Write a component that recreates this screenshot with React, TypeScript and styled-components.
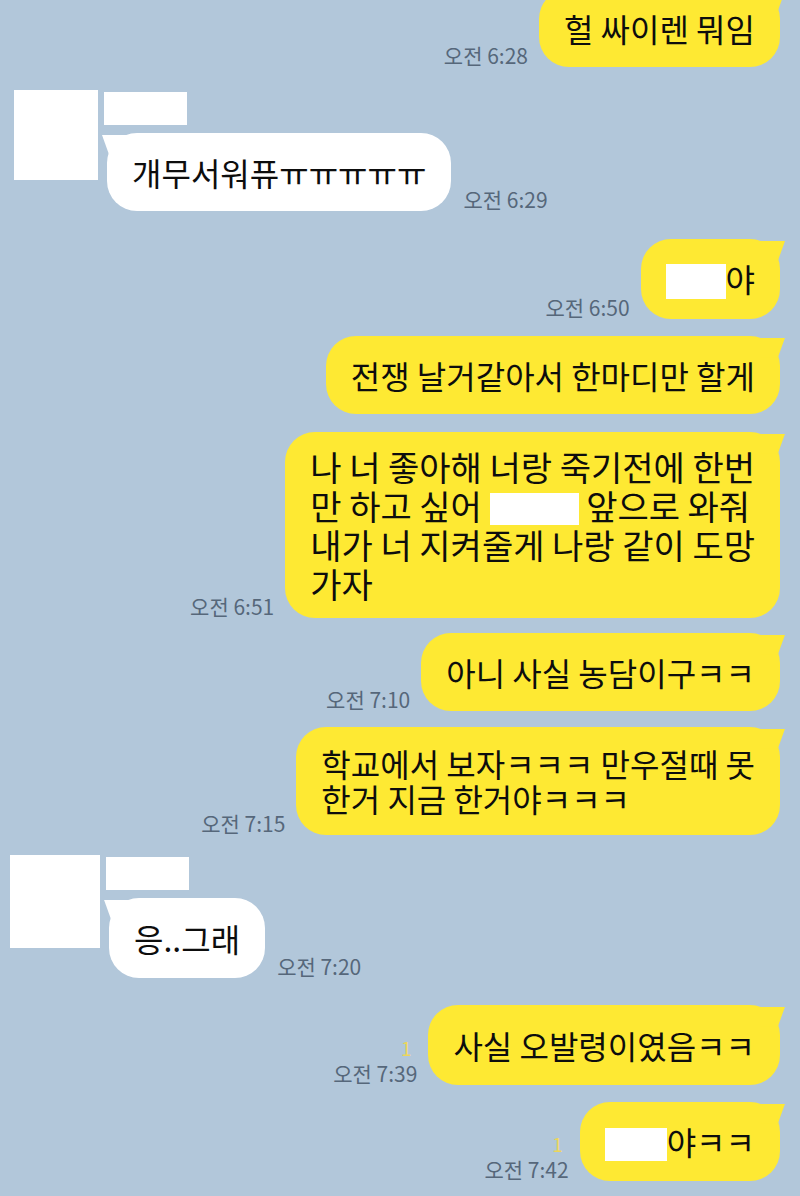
import React from 'react';
import styled, { createGlobalStyle, css } from 'styled-components';

const GlobalStyle = createGlobalStyle`
  html, body {
    margin: 0;
    padding: 0;
    background: #b2c7da;
  }
  body {
    font-family: "Noto Sans CJK KR", "Noto Sans", sans-serif;
  }
`;

const YELLOW = '#fee933';

const Screen = styled.div`
  width: 800px;
  height: 1196px;
  overflow: hidden;
  background: #b2c7da;
`;

const Feed = styled.div`
  display: flex;
  flex-direction: column;
  margin-top: -11px;
  padding: 0 20px 0 14px;
`;

const MyRow = styled.div<{ $gap: number }>`
  display: flex;
  justify-content: flex-end;
  align-items: flex-end;
  gap: 11px;
  margin-top: ${(p) => p.$gap}px;
`;

const FriendRow = styled.div<{ $gap: number }>`
  display: flex;
  align-items: flex-start;
  gap: 6px;
  margin-top: ${(p) => p.$gap}px;
`;

const Avatar = styled.div<{ $w: number; $h: number; $x?: number }>`
  width: ${(p) => p.$w}px;
  height: ${(p) => p.$h}px;
  margin-left: ${(p) => p.$x ?? 0}px;
  background: #fff;
  flex-shrink: 0;
`;

const FriendBody = styled.div`
  display: flex;
  flex-direction: column;
  align-items: flex-start;
  gap: 8px;
  padding-top: 2px;
`;

const NameTag = styled.div`
  width: 83px;
  height: 33px;
  background: #fff;
`;

const FriendLine = styled.div`
  display: flex;
  align-items: flex-end;
  gap: 12px;
  padding-left: 3px;
`;

const Meta = styled.div`
  display: flex;
  flex-direction: column;
  align-items: flex-end;
  flex-shrink: 0;
`;

const Unread = styled.span`
  font-size: 19px;
  line-height: 22px;
  color: #ecd65a;
  margin: 0 6px 2px 0;
`;

const Time = styled.span`
  font-size: 21px;
  line-height: 24px;
  color: #56677a;
  white-space: nowrap;
`;

const bubbleBase = css`
  position: relative;
  font-size: 32px;
  font-weight: 400;
  line-height: 38px;
  color: #0d0d0d;
  white-space: nowrap;
  border-radius: 30px;
  padding: 20px 25px;
`;

const MyBubble = styled.div<{ $lh?: number; $fs?: number; $py?: number }>`
  ${bubbleBase};
  background: ${YELLOW};
  font-size: ${(p) => p.$fs ?? 32}px;
  line-height: ${(p) => p.$lh ?? 38}px;
  padding-top: ${(p) => p.$py ?? 20}px;
  padding-bottom: ${(p) => p.$py ?? 20}px;

  &::after {
    content: '';
    position: absolute;
    top: 2px;
    right: -5px;
    width: 24px;
    height: 20px;
    background: ${YELLOW};
    clip-path: polygon(0 0, 100% 0, 70% 100%, 0 100%);
  }
`;

const FriendBubble = styled.div<{ $py?: number }>`
  ${bubbleBase};
  background: #fff;
  padding-top: ${(p) => p.$py ?? 20}px;
  padding-bottom: ${(p) => p.$py ?? 20}px;

  &::before {
    content: '';
    position: absolute;
    top: 2px;
    left: -5px;
    width: 24px;
    height: 20px;
    background: #fff;
    clip-path: polygon(0 0, 100% 0, 100% 100%, 30% 100%);
  }
`;

const Blank = styled.span<{ $w: number; $h: number }>`
  display: inline-block;
  width: ${(p) => p.$w}px;
  height: ${(p) => p.$h}px;
  background: #fff;
  vertical-align: middle;
  margin-top: -4px;
`;

function Stamp({ time, unread }: { time: string; unread?: boolean }) {
  return (
    <Meta>
      {unread && <Unread>1</Unread>}
      <Time>{time}</Time>
    </Meta>
  );
}

export default function App() {
  return (
    <Screen>
      <GlobalStyle />
      <Feed>
        <MyRow $gap={0}>
          <Stamp time="오전 6:28" />
          <MyBubble>헐 싸이렌 뭐임</MyBubble>
        </MyRow>

        <FriendRow $gap={23}>
          <Avatar $w={84} $h={90} />
          <FriendBody>
            <NameTag />
            <FriendLine>
              <FriendBubble>개무서워퓨ㅠㅠㅠㅠㅠ</FriendBubble>
              <Stamp time="오전 6:29" />
            </FriendLine>
          </FriendBody>
        </FriendRow>

        <MyRow $gap={28}>
          <Stamp time="오전 6:50" />
          <MyBubble>
            <Blank $w={60} $h={35} />야
          </MyBubble>
        </MyRow>

        <MyRow $gap={17}>
          <MyBubble>전쟁 날거같아서 한마디만 할게</MyBubble>
        </MyRow>

        <MyRow $gap={18}>
          <Stamp time="오전 6:51" />
          <MyBubble $fs={34} $lh={39} $py={15}>
            나 너 좋아해 너랑 죽기전에 한번
            <br />
            만 하고 싶어 <Blank $w={89} $h={32} /> 앞으로 와줘
            <br />
            내가 너 지켜줄게 나랑 같이 도망
            <br />
            가자
          </MyBubble>
        </MyRow>

        <MyRow $gap={15}>
          <Stamp time="오전 7:10" />
          <MyBubble>아니 사실 농담이구ㅋㅋ</MyBubble>
        </MyRow>

        <MyRow $gap={16}>
          <Stamp time="오전 7:15" />
          <MyBubble $lh={35} $py={19}>
            학교에서 보자ㅋㅋㅋ 만우절때 못
            <br />
            한거 지금 한거야ㅋㅋㅋ
          </MyBubble>
        </MyRow>

        <FriendRow $gap={20}>
          <Avatar $w={90} $h={93} $x={-4} />
          <FriendBody>
            <NameTag />
            <FriendLine>
              <FriendBubble $py={21}>응..그래</FriendBubble>
              <Stamp time="오전 7:20" />
            </FriendLine>
          </FriendBody>
        </FriendRow>

        <MyRow $gap={27}>
          <Stamp time="오전 7:39" unread />
          <MyBubble $py={21}>사실 오발령이였음ㅋㅋ</MyBubble>
        </MyRow>

        <MyRow $gap={17}>
          <Stamp time="오전 7:42" unread />
          <MyBubble>
            <Blank $w={62} $h={33} />야ㅋㅋ
          </MyBubble>
        </MyRow>
      </Feed>
    </Screen>
  );
}
